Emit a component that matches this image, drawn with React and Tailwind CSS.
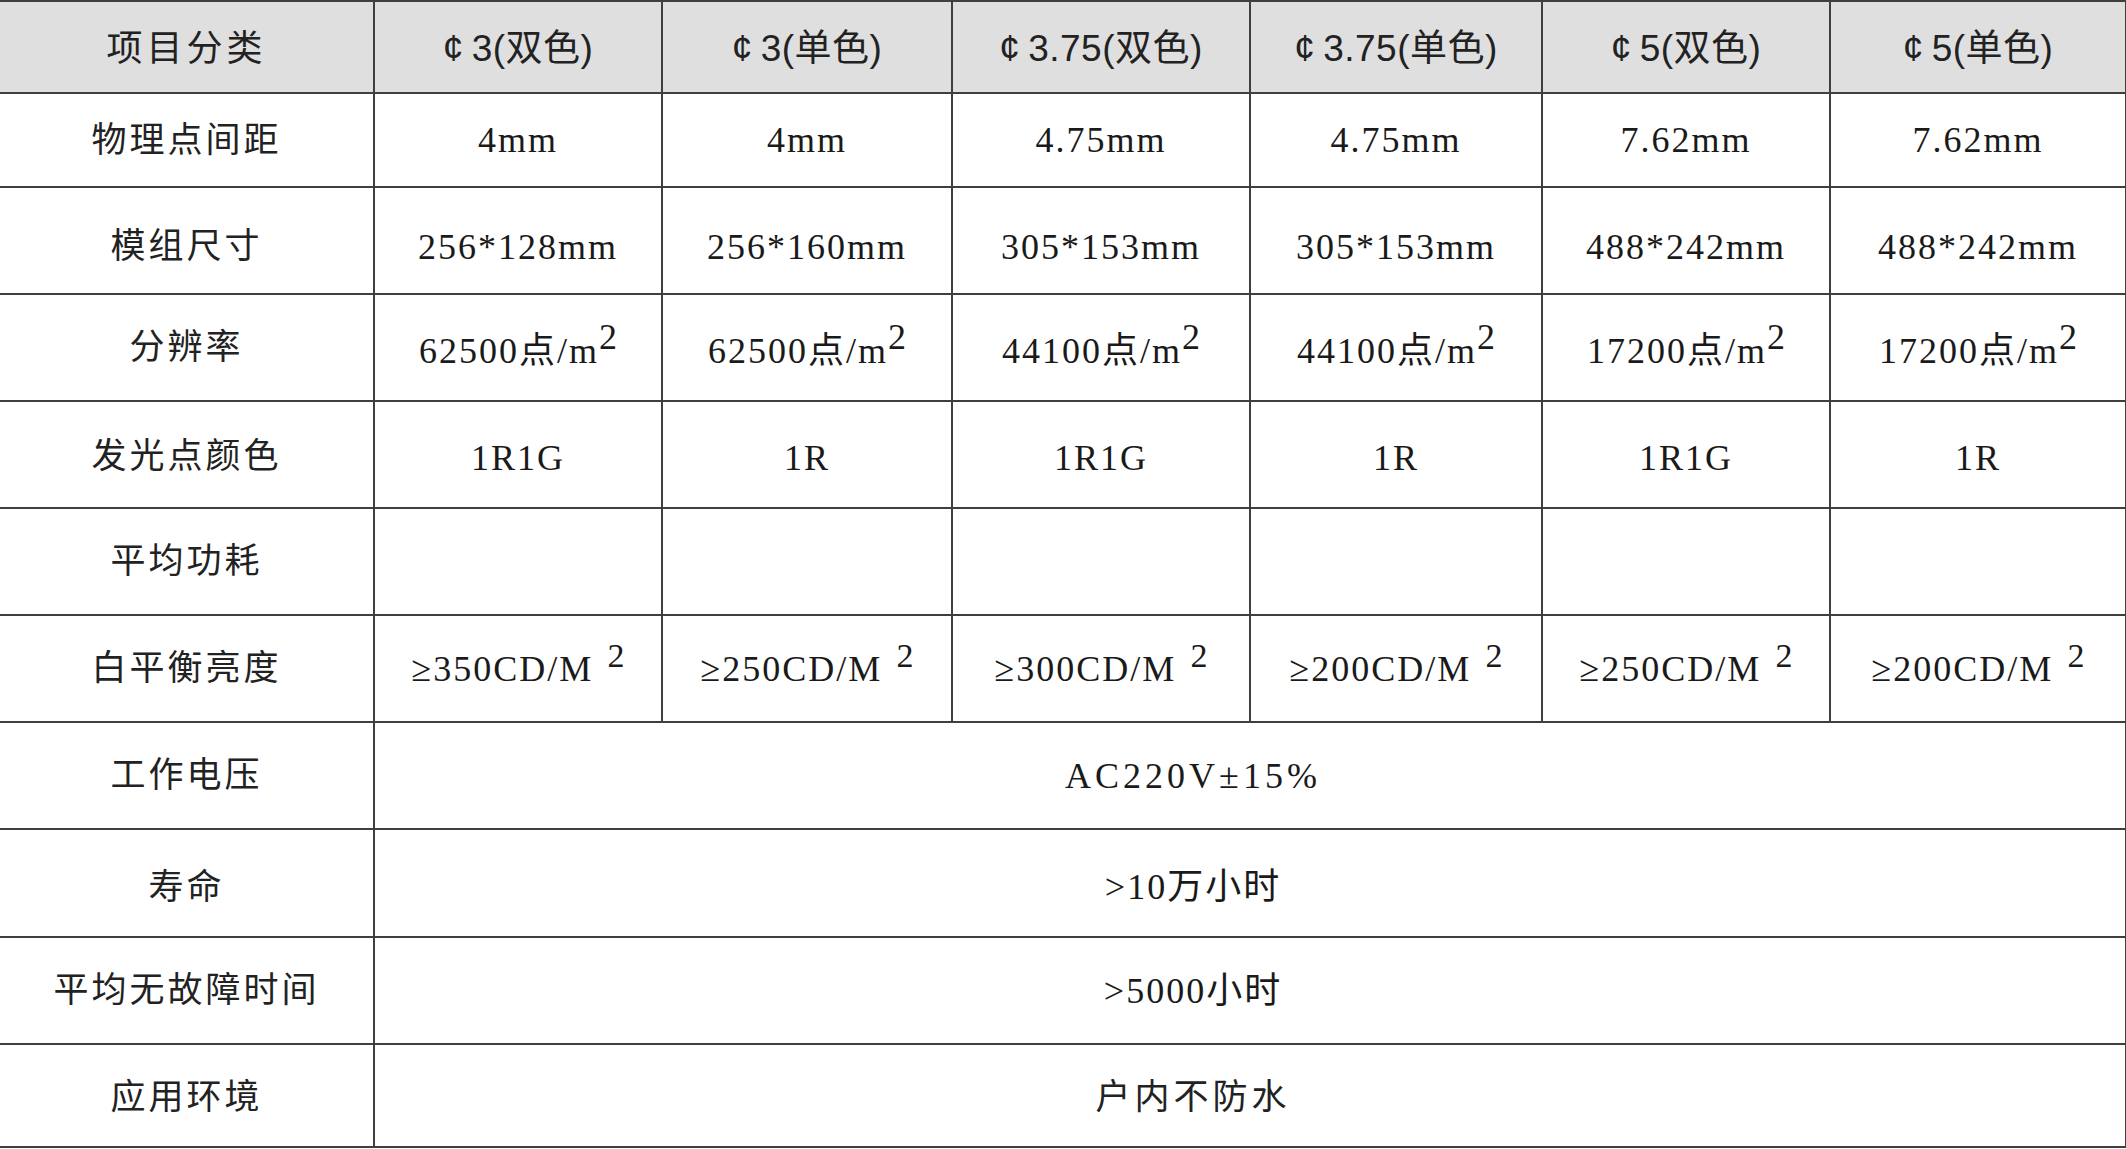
import React from "react"

const cols = [
  { label: "¢\u20093(双色)", pitch: "4mm", size: "256*128mm", res: "62500", color: "1R1G", lum: "350" },
  { label: "¢\u20093(单色)", pitch: "4mm", size: "256*160mm", res: "62500", color: "1R", lum: "250" },
  { label: "¢\u20093.75(双色)", pitch: "4.75mm", size: "305*153mm", res: "44100", color: "1R1G", lum: "300" },
  { label: "¢\u20093.75(单色)", pitch: "4.75mm", size: "305*153mm", res: "44100", color: "1R", lum: "200" },
  { label: "¢\u20095(双色)", pitch: "7.62mm", size: "488*242mm", res: "17200", color: "1R1G", lum: "250" },
  { label: "¢\u20095(单色)", pitch: "7.62mm", size: "488*242mm", res: "17200", color: "1R", lum: "200" }
]

const sans = "font-['Liberation_Sans','Noto_Sans_CJK_SC',sans-serif]"
const serif = "font-['Liberation_Serif','Noto_Sans_CJK_SC',serif]"

const cell = "border-2 border-[#3f3f3f] text-center align-middle p-0"
const labelCell = `${cell} border-l-0 ${sans} text-[35px] tracking-[3px] text-[#222]`
const valueCell = `${cell} ${serif} text-[36px] tracking-[2px] text-[#1a1a1a]`

const Row = ({ label, h, children, labelClass = "" }) => (
  <tr style={{ height: h }}>
    <td className={`${labelCell} ${labelClass}`}>{label}</td>
    {children}
  </tr>
)

export default function App() {
  return (
    <div className="w-[2126px] h-[1149px] bg-white overflow-hidden">
      <table className="w-[2126px] table-fixed border-collapse">
        <colgroup>
          <col className="w-[374px]" />
          <col className="w-[288px]" />
          <col className="w-[290px]" />
          <col className="w-[298px]" />
          <col className="w-[292px]" />
          <col className="w-[288px]" />
          <col className="w-[296px]" />
        </colgroup>
        <tbody>
          {/* header */}
          <tr className="h-[92px] bg-[#dfdfdf]">
            <td className={`${cell} border-l-0 pt-[4px] ${sans} text-[36px] tracking-[4px] text-[#222]`}>项目分类</td>
            {cols.map((c) => (
              <td key={c.label} className={`${cell} pt-[4px] ${sans} text-[37px] tracking-[0.5px] text-[#222]`}>
                {c.label}
              </td>
            ))}
          </tr>

          <Row label="物理点间距" h={94}>
            {cols.map((c, i) => (
              <td key={i} className={valueCell}>{c.pitch}</td>
            ))}
          </Row>

          <Row label="模组尺寸" h={107} labelClass="pt-[12px]">
            {cols.map((c, i) => (
              <td key={i} className={`${valueCell} pt-[12px]`}>{c.size}</td>
            ))}
          </Row>

          <Row label="分辨率" h={107}>
            {cols.map((c, i) => (
              <td key={i} className={`${valueCell} pt-[6px]`}>
                {c.res}点/m
                <span className="relative -top-[14px] text-[36px] tracking-normal">2</span>
              </td>
            ))}
          </Row>

          <Row label="发光点颜色" h={107} labelClass="pt-[4px]">
            {cols.map((c, i) => (
              <td key={i} className={`${valueCell} pt-[6px]`}>{c.color}</td>
            ))}
          </Row>

          <Row label="平均功耗" h={107}>
            {cols.map((c, i) => (
              <td key={i} className={valueCell}></td>
            ))}
          </Row>

          <Row label="白平衡亮度" h={107}>
            {cols.map((c, i) => (
              <td key={i} className={valueCell}>
                ≥{c.lum}CD/M
                <span className="relative -top-[14px] ml-[14px] text-[34px] tracking-normal">2</span>
              </td>
            ))}
          </Row>

          <Row label="工作电压" h={107}>
            <td colSpan={6} className={`${valueCell} tracking-[4px] pr-[114px]`}>
              AC220V±15%
            </td>
          </Row>

          <Row label="寿命" h={108} labelClass="pt-[8px]">
            <td colSpan={6} className={`${valueCell} pr-[114px] pt-[8px]`}>
              &gt;10万小时
            </td>
          </Row>

          <Row label="平均无故障时间" h={107}>
            <td colSpan={6} className={`${valueCell} pr-[114px]`}>
              &gt;5000小时
            </td>
          </Row>

          <Row label="应用环境" h={103} labelClass="pt-[4px]">
            <td colSpan={6} className={`${cell} ${sans} text-[35px] tracking-[4px] text-[#222] pr-[114px] pt-[4px]`}>
              户内不防水
            </td>
          </Row>
        </tbody>
      </table>
    </div>
  )
}
